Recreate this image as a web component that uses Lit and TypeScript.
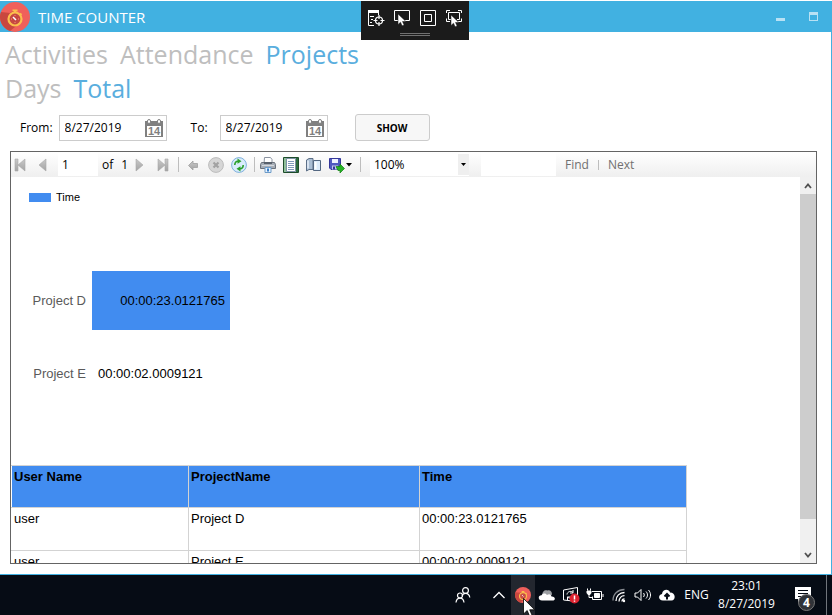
import { LitElement, html, svg, css } from "lit";
import { customElement, property, state } from "lit/decorators.js";
import { classMap } from "lit/directives/class-map.js";
import { styleMap } from "lit/directives/style-map.js";

interface Entry {
  user: string;
  project: string;
  time: string;
  seconds: number;
}

const ENTRIES: Entry[] = [
  { user: "user", project: "Project D", time: "00:00:23.0121765", seconds: 23 },
  { user: "user", project: "Project E", time: "00:00:02.0009121", seconds: 0 },
];

const PIXELS_PER_SECOND = 6;

const GREY_DEFS = svg`<defs>
  <linearGradient id="g" x1="0" y1="0" x2="0" y2="1"><stop offset="0" stop-color="#c9c9c9"/><stop offset="1" stop-color="#a3a3a3"/></linearGradient>
</defs>`;

const GLYPHS = {
  first: svg`${GREY_DEFS}<path d="M3 2h3v12H3z M13 2v12L6 8z" fill="url(#g)" stroke="#a8a8a8" stroke-width=".6"/>`,
  prev: svg`${GREY_DEFS}<path d="M11 2v12L4 8z" fill="url(#g)" stroke="#a8a8a8" stroke-width=".6"/>`,
  next: svg`${GREY_DEFS}<path d="M4 2v12l7-6z" fill="url(#g)" stroke="#a8a8a8" stroke-width=".6"/>`,
  last: svg`${GREY_DEFS}<path d="M3 2v12l7-6z M10 2h3v12h-3z" fill="url(#g)" stroke="#a8a8a8" stroke-width=".6"/>`,
  back: svg`${GREY_DEFS}<path d="M3.500 8.500 8 4v2.500h4.500v4H8V13z" fill="url(#g)" stroke="#a0a0a0" stroke-width=".8"/>`,
  stop: svg`<circle cx="8" cy="8" r="7.400" fill="#d6d6d6" stroke="#bcbcbc"/><path d="m5.500 5.500 5 5m0-5-5 5" stroke="#a2a2a2" stroke-width="2.200"/>`,
  refresh: svg`<circle cx="8" cy="8" r="7.400" fill="#d8ecfb" stroke="#7fb0dc"/>
    <path d="M3.800 8C3.800 5.800 5 4.300 7 4.200" fill="none" stroke="#2ba02b" stroke-width="1.600"/><path d="M6.500 1.500 10.500 4.200 6.500 6.800z" fill="#2ba02b"/>
    <path d="M12.200 8c0 2.200-1.200 3.700-3.200 3.800" fill="none" stroke="#2ba02b" stroke-width="1.600"/><path d="M9.500 9.200v5.300L5.500 11.800z" fill="#2ba02b"/>`,
  print: svg`<path d="M4.500.5h6l1.500 2V7h-8z" fill="#fff" stroke="#8b93a0"/><path d="M1.500 5.500h13l1 2v4h-15v-4z" fill="#a6adb6" stroke="#6b727c"/>
    <path d="M4 5h8v2H4z" fill="#59616c"/><path d="M2 8.500h12" stroke="#d5d9de"/><path d="M5 10.500h6v5H5z" fill="#e7f3ff" stroke="#6d9bc8"/><path d="M8 11.500v3" stroke="#3b7fc8" stroke-width="2"/>`,
  layout: svg`<path d="M.5.5h15v15H.5z" fill="#8fbf9a" stroke="#1d4c2b"/><path d="M13 1h2v14h-2z" fill="#2c6b3e"/><path d="M3.500 1.500h9v13h-9z" fill="#fff" stroke="#7d91a5"/>
    <path d="M5 4.500h6M5 6.500h6M5 8.500h6M5 10.500h6M5 12.500h6" stroke="#7f9abb"/>`,
  setup: svg`<path d="M.5 3 3 1.500h4v11H3L.5 14z" fill="#a9bdd3" stroke="#5c6f87"/><path d="M2 3.500v8" stroke="#e8f1fa" stroke-width="1.500"/>
    <path d="M7.500 3.500h7v10h-7z" fill="#dcebfa" stroke="#536781"/><path d="M9.500 5v7" stroke="#fff" stroke-width="2"/>`,
  save: svg`<path d="M.5 1.500h11v11H2l-1.500-1.500z" fill="#5058c0" stroke="#34379a"/><path d="M3 2h6v4H3z" fill="#eef1ff"/><path d="M3 8.500h6v4H3z" fill="#c3c8ee"/><path d="M4 9.500h2v3H4z" fill="#34379a"/>
    <path d="M7 9.500h4V7l4.500 4.500L11 16v-2.500H9z" fill="#25b325" stroke="#138013" stroke-width=".7"/>`,
};

const MARK = svg`<circle cx="15" cy="15" r="15" fill="#f0605b"/>
  <path d="M0 15 C0 13 .5 11 1 10 L10 11 L14 8 L20 21 L10 29 C4 27 0 21 0 15z" fill="#c9473f"/>
  <circle cx="15" cy="17" r="6.500" fill="#c74742" stroke="#fbbf4d" stroke-width="2.200"/>
  <path d="M12.500 8.500h5M15 8.500v2M20 11.500l1.500 1.500" stroke="#fbbf4d" stroke-width="2"/>
  <path d="m13 15 3 3" stroke="#fff" stroke-width="1.500"/>
  <path d="M15 13v1M15 20v1M11 17h1M18 17h1" stroke="#f59a72"/>`;

@customElement("date-field")
class DateField extends LitElement {
  @property() label = "";
  @property() value = "";

  static styles = css`
    :host { display: flex; align-items: center; gap: 6px; }
    .label { min-width: 31px; font: 12px/16px "Open Sans", "Noto Sans", sans-serif; color: #000; }
    :host(.to) .label { min-width: 23px; }
    .box { display: flex; align-items: center; box-sizing: border-box; width: 108px; height: 26px; border: 1px solid #ccc; background: #fff; }
    .input { flex: 1; min-width: 0; box-sizing: border-box; height: 24px; padding: 0 0 0 5px; border: 0; background: none; font: 12px/16px "Open Sans", "Noto Sans", sans-serif; color: #000; outline: none; }
    .pick { display: flex; padding: 0 3px; border: 0; background: none; }
    .day { font: 700 11px "Liberation Sans", Arial, sans-serif; fill: #808080; }
  `;

  render() {
    return html`
      <label class="label" for="date">${this.label}</label>
      <div class="box">
        <input class="input" id="date" .value=${this.value} />
        <button class="pick" aria-label="Open calendar">
          <svg width="18" height="18" viewBox="0 0 18 18">
            <path d="M0 2h18v16H0z" fill="#808080" />
            <path d="M2 7h14v10H2z" fill="#fff" />
            <rect x="2.500" y=".5" width="3" height="4" rx="1.500" fill="#fff" stroke="#808080" />
            <rect x="12.500" y=".5" width="3" height="4" rx="1.500" fill="#fff" stroke="#808080" />
            <text class="day" x="9" y="16" text-anchor="middle">14</text>
          </svg>
        </button>
      </div>
    `;
  }
}

@customElement("report-toolbar")
class ReportToolbar extends LitElement {
  static styles = css`
    :host { display: flex; align-items: center; height: 25px; padding-left: 1px; background: linear-gradient(#fff, #efefef); font: 12px/16px "Open Sans", "Noto Sans", sans-serif; color: #000; }
    .group { display: flex; align-items: center; gap: 7px; }
    .tool { display: flex; padding: 0; border: 0; background: none; }
    .page { box-sizing: border-box; width: 40px; height: 23px; margin: 0 4px 0 7px; padding: 0 4px; border: 0; background: #fff; font: inherit; }
    .total { display: flex; gap: 8px; width: 30px; white-space: nowrap; }
    .rule { width: 1px; height: 15px; background: #bdbdbd; }
    .rule.small { height: 10px; }
    .history { margin: 0 7px 0 6px; }
    .output { margin: 0 8px 0 5px; }
    .save { width: 23px; align-items: center; }
    .zoom { position: relative; display: flex; margin: 0 12px 0 9px; width: 99px; height: 22px; }
    .select { appearance: none; width: 100%; padding: 0 4px; border: 0; border-radius: 0; background: #fff; font: inherit; color: #000; }
    .arrow { position: absolute; inset: 0 0 1px auto; display: flex; align-items: center; justify-content: center; width: 11px; background: #efefef; pointer-events: none; }
    .find { box-sizing: border-box; width: 75px; height: 23px; margin-right: 9px; padding: 0 4px; border: 0; background: #fff; font: inherit; }
    .search { gap: 9px; }
    .text { padding: 0; border: 0; background: none; font: inherit; color: #707070; }
  `;

  private tool(name: keyof typeof GLYPHS, label: string) {
    return html`<button class="tool" aria-label=${label}>
      <svg width="16" height="16" viewBox="0 0 16 16">${GLYPHS[name]}</svg>
    </button>`;
  }

  render() {
    return html`
      <div class="group">${this.tool("first", "First page")}${this.tool("prev", "Previous page")}</div>
      <input class="page" aria-label="Current page" .value=${"1"} />
      <span class="total"><span>of</span><span>1</span></span>
      <div class="group">${this.tool("next", "Next page")}${this.tool("last", "Last page")}</div>
      <div class="group">
        <span></span>
        <span class="rule"></span>
      </div>
      <div class="group history">
        ${this.tool("back", "Back")}${this.tool("stop", "Stop")}${this.tool("refresh", "Refresh")}
      </div>
      <span class="rule"></span>
      <div class="group output">
        ${this.tool("print", "Print")}${this.tool("layout", "Print layout")}${this.tool("setup", "Page setup")}
        <button class="tool save" aria-label="Export">
          <svg width="16" height="16" viewBox="0 0 16 16">${GLYPHS.save}</svg>
          <svg width="7" height="4" viewBox="0 0 7 4"><path d="M1 0h6L4 3.500z" /></svg>
        </button>
      </div>
      <span class="rule"></span>
      <div class="zoom">
        <select class="select" aria-label="Zoom"><option>100%</option></select>
        <span class="arrow"><svg width="5" height="3" viewBox="0 0 5 3"><path d="M0 0h5L2.500 3z" /></svg></span>
      </div>
      <input class="find" aria-label="Find text" />
      <div class="group search">
        <button class="text">Find</button><span class="rule small"></span><button class="text">Next</button>
      </div>
    `;
  }
}

@customElement("time-report")
class TimeReport extends LitElement {
  static styles = css`
    :host { display: flex; flex: 1; min-height: 0; font: 13px/16px "Liberation Sans", Arial, sans-serif; color: #000; }
    .page { flex: 1; min-width: 0; overflow: hidden; }
    .legend { display: flex; align-items: center; gap: 5px; padding: 12px 0 0 18px; font-size: 11px; }
    .swatch { width: 22px; height: 9px; background: #418cf0; }
    .chart { padding: 59px 0 55px; }
    .row { display: flex; align-items: center; height: 73px; }
    .name { width: 75px; margin-right: 6px; text-align: right; color: #5a5a5a; }
    .bar { display: flex; align-items: center; justify-content: flex-end; height: 59px; background: #418cf0; }
    .inside { padding-right: 5px; }
    .outside { padding-left: 6px; }
    .table { width: 676px; border-collapse: collapse; table-layout: fixed; }
    .user { width: 177px; }
    .project { width: 231px; }
    .cell { box-sizing: border-box; height: 43px; padding: 3px 2px; border: 1px solid #d3d3d3; text-align: left; vertical-align: top; }
    .cell:first-child { border-left-color: transparent; }
    .head { height: 42px; background: #418cf0; font-weight: 700; }
    .scroll { display: flex; flex-direction: column; width: 16px; background: #f0f0f0; }
    .step { display: flex; align-items: center; justify-content: center; height: 17px; padding: 0; border: 0; background: none; }
    .thumb { flex: 325; background: #cdcdcd; }
    .rest { flex: 27; }
  `;

  private bar(e: Entry) {
    const width = e.seconds * PIXELS_PER_SECOND;
    return html`<div class="row">
      <span class="name">${e.project}</span>
      <div class="bar" style=${styleMap({ width: `${width}px` })}>
        ${width ? html`<span class="inside">${e.time}</span>` : ""}
      </div>
      ${width ? "" : html`<span class="outside">${e.time}</span>`}
    </div>`;
  }

  render() {
    return html`
      <div class="page">
        <div class="legend"><span class="swatch"></span>Time</div>
        <div class="chart">${ENTRIES.map((e) => this.bar(e))}</div>
        <table class="table">
          <thead>
            <tr>
              <th class="cell head user">User Name</th>
              <th class="cell head project">ProjectName</th>
              <th class="cell head">Time</th>
            </tr>
          </thead>
          <tbody>
            ${ENTRIES.map(
              (e) => html`<tr>
                <td class="cell">${e.user}</td>
                <td class="cell">${e.project}</td>
                <td class="cell">${e.time}</td>
              </tr>`
            )}
          </tbody>
        </table>
      </div>
      <div class="scroll">
        <button class="step" aria-label="Scroll up">
          <svg width="8" height="6" viewBox="0 0 8 6"><path d="m1 5 3-3.500L7 5" fill="none" stroke="#505050" stroke-width="1.800" /></svg>
        </button>
        <div class="thumb"></div>
        <div class="rest"></div>
        <button class="step" aria-label="Scroll down">
          <svg width="8" height="6" viewBox="0 0 8 6"><path d="m1 1 3 3.500L7 1" fill="none" stroke="#505050" stroke-width="1.800" /></svg>
        </button>
      </div>
    `;
  }
}

@customElement("capture-bar")
class CaptureBar extends LitElement {
  static styles = css`
    :host { display: flex; flex-direction: column; align-items: center; box-sizing: border-box; width: 108px; height: 39px; padding-top: 8px; background: #1b1b1b; }
    .tools { display: flex; gap: 8px; }
    .tool { display: flex; padding: 0; border: 0; background: none; }
    .grip { box-sizing: border-box; width: 30px; height: 3px; margin-top: 6px; border: solid #707070; border-width: 1px 0; }
  `;

  private icon(label: string, body: unknown) {
    return html`<button class="tool" aria-label=${label}>
      <svg width="18" height="18" viewBox="0 0 18 18" fill="none" stroke="#fff">${body}</svg>
    </button>`;
  }

  render() {
    const pointer = (x: number, y: number) =>
      svg`<path transform="translate(${x} ${y})" d="M0 0v10.500l2.500-2.300 1.600 3.600 2-.9-1.600-3.400H8z" fill="#fff" stroke="#1b1b1b" stroke-width=".5"/>`;
    return html`
      <div class="tools">
        ${this.icon("Live visual tree", svg`<path d="M1 2.500h11" stroke-width="3"/><path d="M1.500 3v13.500H7M3 7.500h4M4 10.500h2M3 13.500h2"/><path d="M11.500 3v3"/><circle cx="12" cy="11.500" r="3.500" stroke-width="1.200"/><path d="M12 6v4M12 13v4M6.500 11.500h4M13.500 11.500h4" stroke-width="1.200"/>`)}
        ${this.icon("Select element", svg`<path d="M5 11.500H1.500v-10h15v10H12"/>${pointer(5, 5)}`)}
        ${this.icon("Layout adorners", svg`<path d="M1.500 1.500h15v15h-15z M5.500 5.500h7v7h-7z"/>`)}
        ${this.icon("Track focus", svg`<path d="M1.500 4V1.500H5M13 1.500h3.500V4M16.500 9.500V12.500H13M1.500 9.500V12.500H5"/><path d="M6 10.500H3.500v-7h11v7H12"/>${pointer(6, 6)}`)}
      </div>
      <span class="grip"></span>
    `;
  }
}

@customElement("task-bar")
class TaskBar extends LitElement {
  static styles = css`
    :host { display: flex; justify-content: flex-end; height: 40px; padding-right: 5px; background: #060c15; color: #fff; font: 12px/18px "Open Sans", "Noto Sans", sans-serif; }
    .item { position: relative; display: flex; align-items: center; justify-content: center; width: 24px; padding: 0; border: 0; background: none; color: inherit; font: inherit; }
    .wide { width: 48px; }
    .active { background: #23272f; }
    .lang { width: 35px; }
    .clock { width: 65px; flex-direction: column; }
    .notes { width: 48px; border-right: 1px solid #70757c; }
    .cursor { position: absolute; left: 12px; top: 23px; }
    .count { position: absolute; left: 19px; top: 19px; box-sizing: border-box; width: 17px; height: 17px; border: 1px solid #777; border-radius: 50%; background: #303338; font-weight: 700; line-height: 15px; }
  `;

  private icon(label: string, body: unknown) {
    return html`<button class="item" aria-label=${label}>
      <svg width="18" height="18" viewBox="0 0 18 18" fill="none" stroke="#fff">${body}</svg>
    </button>`;
  }

  render() {
    return html`
      <button class="item wide" aria-label="People">
        <svg width="16" height="18" viewBox="0 0 16 18" fill="none" stroke="#fff" stroke-width="1.200">
          <circle cx="10.500" cy="4.500" r="2.900" /><path d="M7 10c.8-1.800 2-2.600 3.500-2.600 2.400 0 3.900 1.500 4.300 4.100" />
          <circle cx="5" cy="9.500" r="2.500" /><path d="M1 16.500c.3-2.800 1.700-4.400 4-4.400s3.700 1.600 4 4.400" />
        </svg>
      </button>
      ${this.icon("Show hidden icons", svg`<path d="m3.500 12 5.500-5.500 5.500 5.500" stroke-width="1.300"/>`)}
      <button class="item active" aria-label="Time Counter">
        <svg width="16" height="16" viewBox="0 0 30 30">${MARK}</svg>
        <svg class="cursor" width="12" height="19" viewBox="0 0 12 19">
          <path d="M.5.5v15.500l3.700-3.500 2.500 6 2.500-1-2.500-5.700h5z" fill="#fff" stroke="#000" stroke-width=".8" />
        </svg>
      </button>
      ${this.icon("OneDrive", svg`<g stroke="none"><path d="M4 10.500C4 5 7 3.500 9.500 4.500c3-.7 4.500 1.500 4.500 4L9 12z" fill="#9c9fa3"/><path d="M4 14.500c-4 0-4.500-5-.5-5.200C5 6.800 8 7 9 9c2-1.700 4.500-.5 4.500 1.500 4-.3 4.500 4 1 4z" fill="#fff"/></g>`)}
      ${this.icon("Sync error", svg`<path d="m1.500 4 14-2.500v14l-14-1.500z"/><path d="M5 8.500c.3-3 4-4 6-2M11 4v3H8M11 9.500c-.3 2.500-3.500 3.500-5.500 1.500M5.500 14v-3h3"/><circle cx="12.500" cy="12.500" r="5" fill="#dc2330" stroke="none"/><path d="M12.500 9.500v4M12.500 14.500v1.300" stroke-width="1.500"/>`)}
      ${this.icon("Battery", svg`<path d="M6 5.500h9.500v8h-9v-3"/><path d="M8.500 7.500h5v4h-5z" fill="#fff"/><path d="M17 8v3M1.500 2.500v2M4.500 2.500v2"/><path d="M1 5h4v2L4 8.500H2L1 7z" fill="#fff"/><path d="M3 8v3.500h3"/>`)}
      ${this.icon("Wi-Fi", svg`<g stroke-width="1.300"><path d="M3 14.500C3 8 8 3.500 14.500 3.500" stroke="#868a90"/><path d="M6 15c0-5 3.500-8.500 8.500-8.500M9 15.500c0-3.300 2.200-5.800 5.500-5.800M12 15.500c0-1.500 1-2.700 2.500-2.700"/></g><circle cx="14" cy="15" r="1.200" fill="#fff" stroke="none"/>`)}
      ${this.icon("Volume", svg`<path d="M1 7h2.500L7 3.500v11L3.500 11H1z"/><path d="M9.500 7c1 1.300 1 2.700 0 4M12 5.500c2 2.200 2 4.800 0 7M14.500 4c2.700 3 2.700 7 0 10"/>`)}
      ${this.icon("Backup", svg`<path d="M5 14.500c-5 0-5-6-1-6.500C4.500 3 11 2.500 12 6.500c6 0 6 8 1.500 8z" fill="#fff" stroke="none"/><path d="M9 13.500V8.500M6.500 10.500 9 8l2.500 2.500" stroke="#060c15" stroke-width="2"/>`)}
      <button class="item lang">ENG</button>
      <button class="item clock"><span>23:01</span><span>8/27/2019</span></button>
      <button class="item notes" aria-label="4 notifications">
        <svg width="24" height="18" viewBox="0 0 24 18">
          <path d="M4 1h16v12H11l-4 4v-4H4z" fill="#fff" /><path d="M7 4.500h10M7 7.500h10M7 10.500h7" stroke="#060c15" />
        </svg>
        <span class="count">4</span>
      </button>
    `;
  }
}

@customElement("app-root")
class AppRoot extends LitElement {
  @state() private section = "Projects";
  @state() private view = "Total";

  static styles = css`
    :host { display: flex; flex-direction: column; height: 100vh; background: #fff; font-family: "Open Sans", "Noto Sans", sans-serif; }
    .window { position: relative; display: flex; flex: 1; flex-direction: column; min-height: 0; box-sizing: border-box; padding-top: 1px; border-bottom: 1px solid #41b1e1; }
    .title { display: flex; align-items: center; height: 31px; padding-right: 14px; background: #41b1e1; color: #fff; }
    .heading { flex: 1; margin: 0 0 0 8px; font-size: 15px; line-height: 20px; font-weight: 400; }
    .control { display: flex; padding: 0; margin-left: 24px; border: 0; background: none; }
    .capture { position: absolute; left: calc(50% - 55px); top: 1px; }
    .body { display: flex; flex: 1; flex-direction: column; min-height: 0; padding: 5px 14px 10px 10px; border-right: 1px solid #41b1e1; }
    .tabs { display: flex; gap: 12px; margin-left: -5px; }
    .tab { padding: 0; border: 0; background: none; font: 25px/34px "Open Sans", "Noto Sans", sans-serif; color: #bebebe; }
    .tab.on { color: #5aaede; }
    .filter { display: flex; align-items: center; padding: 9px 0 10px 10px; }
    .to { margin-left: 24px; }
    .show { width: 75px; height: 27px; margin-left: 27px; padding: 0; border: 1px solid #ccc; border-radius: 3px; background: #f7f7f7; font: 700 10px/16px "Open Sans", "Noto Sans", sans-serif; color: #000; }
    .viewer { display: flex; flex: 1; flex-direction: column; min-height: 0; border: 1px solid #646464; }
  `;

  private tabs(names: string[], current: string, pick: (n: string) => void) {
    return html`<nav class="tabs">
      ${names.map(
        (n) => html`<button class=${classMap({ tab: true, on: n === current })} @click=${() => pick(n)}>${n}</button>`
      )}
    </nav>`;
  }

  render() {
    return html`
      <main class="window">
        <header class="title">
          <svg width="30" height="30" viewBox="0 0 30 30">${MARK}</svg>
          <h1 class="heading">TIME COUNTER</h1>
          <button class="control" aria-label="Minimize">
            <svg width="9" height="9" viewBox="0 0 9 9"><path d="M0 6h9v3H0z" fill="#b8e1f4" /></svg>
          </button>
          <button class="control" aria-label="Maximize">
            <svg width="9" height="9" viewBox="0 0 9 9"><path d="M0 0h9v9H0z M1 3v5h7V3z" fill="#b8e1f4" fill-rule="evenodd" /></svg>
          </button>
        </header>
        <capture-bar class="capture"></capture-bar>
        <div class="body">
          ${this.tabs(["Activities", "Attendance", "Projects"], this.section, (n) => (this.section = n))}
          ${this.tabs(["Days", "Total"], this.view, (n) => (this.view = n))}
          <div class="filter">
            <date-field label="From:" value="8/27/2019"></date-field>
            <date-field class="to" label="To:" value="8/27/2019"></date-field>
            <button class="show">SHOW</button>
          </div>
          <section class="viewer">
            <report-toolbar></report-toolbar>
            <time-report></time-report>
          </section>
        </div>
      </main>
      <task-bar></task-bar>
    `;
  }
}
